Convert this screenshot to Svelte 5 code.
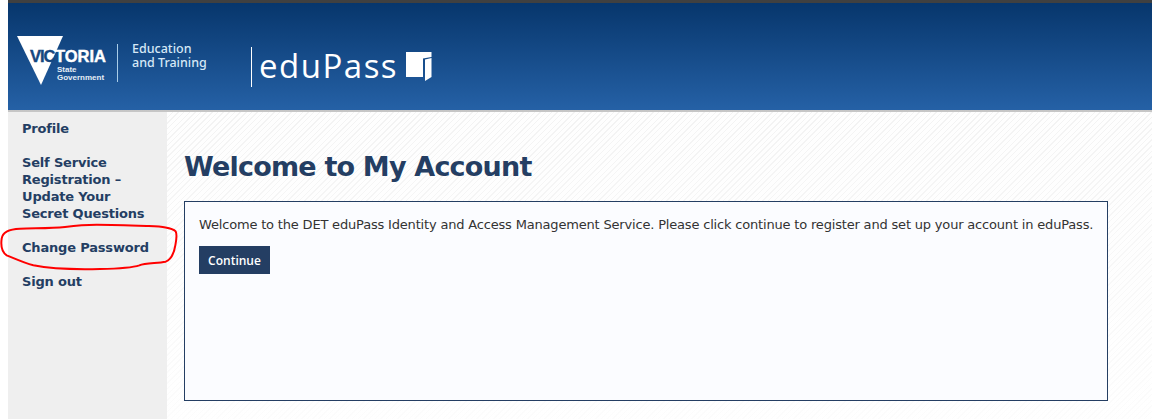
<script>
  const menu = ['Profile', 'Self Service Registration – Update Your Secret Questions', 'Change Password', 'Sign out'];
</script>

<div class="page">
  <div class="topbar"></div>
  <header class="banner">
    <svg class="vic" width="200" height="56" viewBox="0 0 200 56" aria-label="Victoria State Government">
      <polygon points="9,3 55,3 33,52" fill="#fff" />
      <text x="22" y="29" class="vic-word vic-dark">VIC</text>
      <text x="47" y="29" class="vic-word">TORIA</text>
      <text x="49" y="39" class="vic-small">State</text>
      <text x="49" y="47" class="vic-small">Government</text>
      <rect x="109" y="11" width="1" height="38" fill="#a9cde8" />
      <text x="124" y="20" class="dept">Education</text>
      <text x="124" y="34" class="dept">and Training</text>
    </svg>
    <div class="edupass">
      <span class="edu-text">eduPass</span>
      <svg class="door" width="26" height="29" viewBox="0 0 26 29">
        <path d="M0 0H25.5V5L17 6.5V25H0Z M19 7.5L25.5 6V25L19 29Z" fill="#fff" />
      </svg>
    </div>
  </header>

  <div class="body">
    <nav class="side">
      {#each menu as item}
        <a href="#top">{item}</a>
      {/each}
    </nav>
    <main class="content">
      <h1>Welcome to My Account</h1>
      <section class="box">
        <p>Welcome to the DET eduPass Identity and Access Management Service. Please click continue to register and set up your account in eduPass.</p>
        <button type="button">Continue</button>
      </section>
    </main>
  </div>
</div>

<svg class="scribble" width="185" height="52" viewBox="0 0 555 156">
  <path d="M527 28C515 15 480 14 440 12C390 10 340 8 290 8C260 8 225 11 195 15C150 20 100 18 60 20C30 21 8 28 5 50C2 70 4 88 20 100C45 110 70 122 100 130C150 140 220 143 300 141C345 140 395 138 418 130C435 122 470 124 497 119C515 112 522 95 526 70C530 50 532 38 527 28Z" />
</svg>

<style>
  :global(body) {
    margin: 0;
    background: #fff;
    font-family: "DejaVu Sans", Verdana, sans-serif;
  }
  :global(html), :global(body) {
    overflow: hidden;
  }
  .page {
    margin-left: 8px;
    height: 419px;
    display: flex;
    flex-direction: column;
  }
  .topbar {
    height: 3px;
    background: #404040;
    flex: none;
  }
  .banner {
    height: 107px;
    background: linear-gradient(#07366c, #2561a6);
    display: flex;
    align-items: flex-start;
    border-bottom: 2px solid;
    border-image: linear-gradient(#8a8a8a, #c6c6c6) 1;
    box-sizing: content-box;
    flex: none;
  }
  .vic {
    margin-top: 30px;
    flex: none;
  }
  .vic-word {
    font: 700 16.5px "Liberation Sans", sans-serif;
    fill: #fff;
    stroke: #fff;
    stroke-width: 0.4;
  }
  .vic-dark {
    fill: #14477f;
    stroke: #14477f;
    letter-spacing: -1px;
  }
  .vic-small {
    font: 700 8px "Liberation Sans", sans-serif;
    fill: #e6eef6;
  }
  .dept {
    font: 500 12.5px "Noto Sans", sans-serif;
    fill: #d6e8f6;
  }
  .edupass {
    margin: 44px 0 0 43px;
    height: 40px;
    border-left: 1px solid #fff;
    padding-left: 7px;
    display: flex;
    align-items: center;
    gap: 8px;
  }
  .edu-text {
    font: 400 33px "Open Sans", sans-serif;
    color: #fff;
    letter-spacing: 1.5px;
    line-height: 40px;
    padding-bottom: 2px;
  }
  .door {
    flex: none;
    margin-top: -1px;
  }
  .body {
    flex: 1;
    min-height: 0;
    display: flex;
    background-color: #fefefe;
    background-image:
      linear-gradient(rgba(255, 255, 255, 0), rgba(255, 255, 255, 0.75)),
      repeating-linear-gradient(135deg, #f3f3f3 0 1px, #fefefe 1px 4px);
  }
  .side {
    width: 159px;
    flex: none;
    background: #efefef;
    box-sizing: border-box;
    padding: 8px 14px 0;
    display: flex;
    flex-direction: column;
    gap: 17px;
  }
  .side a {
    font-size: 13px;
    letter-spacing: -0.18px;
    line-height: 17px;
    font-weight: 700;
    color: #243e63;
    text-decoration: none;
  }
  .content {
    flex: 1;
    min-width: 0;
    padding: 0 44px 0 17px;
  }
  h1 {
    margin: 38px 0 17px;
    font-size: 27px;
    letter-spacing: -0.8px;
    line-height: 34px;
    font-weight: 700;
    color: #243e63;
  }
  .box {
    height: 200px;
    box-sizing: border-box;
    background: #fbfcff;
    border: 1px solid #243e63;
    padding: 14px;
  }
  .box p {
    margin: 0 0 13px;
    font-size: 13px;
    letter-spacing: -0.18px;
    line-height: 17px;
    color: #333;
    white-space: nowrap;
  }
  button {
    display: block;
    width: 71px;
    height: 28px;
    border: 0;
    padding: 0;
    background: #243e63;
    color: #fff;
    font: 600 12px "Open Sans", sans-serif;
  }
  .scribble {
    position: absolute;
    left: 0;
    top: 222px;
    pointer-events: none;
  }
  .scribble path {
    fill: none;
    stroke: #f00;
    stroke-width: 6;
  }
</style>
